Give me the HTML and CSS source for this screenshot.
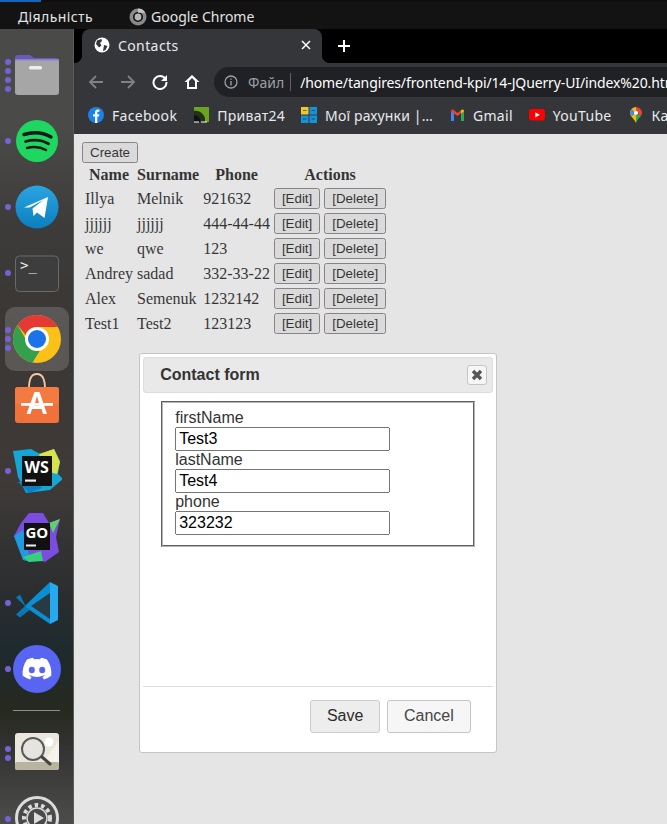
FILE: index.html
```html
<!DOCTYPE html>
<html lang="en">
<head>
  <meta charset="UTF-8">
  <title>Contacts</title>
  <link rel="stylesheet" href="styles.css">
</head>
<body>
  <header class="topbar">
    <span class="activities">Діяльність</span>
    <span class="app-name">
      <svg width="18" height="18" viewBox="0 0 18 18"><circle cx="9" cy="9" r="8.5" fill="#8a8a8a"/><circle cx="9" cy="9" r="5" fill="#111"/><circle cx="9" cy="9" r="3.4" fill="#b5b5b5"/><path d="M9 .5a8.500 8.500 0 0 1 7.400 4.300H9z" fill="#c4c4c4"/></svg>
      Google Chrome
    </span>
  </header>

  <div class="desktop">
    <nav class="dock">
      <div class="dock-item">
        <span class="dots"><i></i><i></i><i></i><i></i></span>
        <svg width="48" height="48" viewBox="0 0 48 48"><path d="M2 7a3 3 0 0 1 3-3h12l4 3h22a3 3 0 0 1 3 3v12H2z" fill="#6a58bd"/><rect x="2" y="8" width="44" height="36" rx="3" fill="#a6a6a6"/><rect x="2" y="8" width="44" height="1.500" fill="#8d7fd0"/><rect x="16" y="15" width="13" height="3.400" rx="1.500" fill="#eee"/></svg>
      </div>
      <div class="dock-item">
        <span class="dots"><i></i></span>
        <svg width="48" height="48" viewBox="0 0 48 48"><circle cx="24" cy="24" r="21" fill="#1ed760"/><g fill="none" stroke="#16191a" stroke-linecap="round"><path d="M11 17.500c9-2.700 19-2 27 2.500" stroke-width="3.400"/><path d="M12.500 24.500c8-2.200 16.500-1.500 23 2.300" stroke-width="2.800"/><path d="M14 31c6.500-1.700 13.500-1 19 2" stroke-width="2.400"/></g></svg>
      </div>
      <div class="dock-item">
        <span class="dots"><i></i></span>
        <svg width="48" height="48" viewBox="0 0 48 48"><defs><linearGradient id="tg" x1="0" y1="0" x2="0" y2="1"><stop offset="0" stop-color="#2ba5e2"/><stop offset="1" stop-color="#0a7fbd"/></linearGradient></defs><circle cx="24" cy="24" r="21.500" fill="url(#tg)"/><path d="M11 24.500 35 14l-3.500 21-7.500-5.500-3.500 3.500-1-7.500 11-8.500-14 7.500z" fill="#fff"/></svg>
      </div>
      <div class="dock-item">
        <span class="dots"><i></i></span>
        <svg width="48" height="48" viewBox="0 0 48 48"><rect x="2.500" y="7" width="43" height="35.500" rx="4" fill="#3d3d3d" stroke="#6a6a6a"/><text x="7" y="21" class="term-text">&gt;_</text></svg>
      </div>
      <div class="dock-item active">
        <span class="dots"><i></i><i></i><i></i></span>
        <svg width="48" height="48" viewBox="0 0 48 48"><circle cx="24" cy="24" r="24" fill="#fbc116"/><path d="M24 0a24 24 0 0 1 20.800 12H24a12 12 0 0 0-11.300 8L4.600 9.900A24 24 0 0 1 24 0z" fill="#e53935"/><path d="M4.600 9.900 14 26.500A11 11 0 0 0 27 35.600L19.500 47.600A24 24 0 0 1 4.600 9.900z" fill="#34a04e"/><circle cx="24" cy="24" r="12" fill="#fff"/><circle cx="24" cy="24" r="9" fill="#1a73e8"/></svg>
      </div>
      <div class="dock-item">
        <svg width="48" height="64" viewBox="0 0 48 64"><path d="M16 16c0-10 2-15 8-15s8 5 8 15" fill="none" stroke="#f6c9a0" stroke-width="1.800"/><rect x="2" y="14" width="44" height="36" rx="3" fill="#f0713a"/><rect x="2" y="14" width="44" height="17" rx="3" fill="#f37b42"/><path d="M21.500 19h5l7.500 22h-4l-1.500-5h-9.500l-1.500 5h-4zM24 23l-2.800 10h5.600z" fill="#fff"/><rect x="8" y="30" width="32" height="2.800" fill="#fff"/></svg>
      </div>
      <div class="dock-item">
        <span class="dots"><i></i></span>
        <svg width="50" height="50" viewBox="0 0 50 50"><path d="M1 5l18-2 9 5 14-5 6 12-2 13 5 5-13 11-24 3-8-16z" fill="#15a6d6"/><path d="M27 8l15-5 6 13-3 12-12-3z" fill="#d9e24a"/><path d="M6 36l14-4 10 10-13 5z" fill="#0d7fc4"/><rect x="10" y="10" width="30" height="30" fill="#111"/><text x="12.500" y="27" class="ide-text">WS</text><rect x="13" y="33.500" width="11" height="2.200" fill="#eee"/></svg>
      </div>
      <div class="dock-item">
        <svg width="48" height="52" viewBox="0 0 48 52"><path d="M16 2h14l6 10 11-4-4 18 3 15-14 10-14-5-8 2L1 25 8 12z" fill="#7a4ce0"/><path d="M1 25l9-6 8 32-8-2z" fill="#1f9be0"/><path d="M10 46l18-6 2 10-14 1z" fill="#36d07a"/><path d="M36 12l11-4-7 14z" fill="#5ed36c"/><rect x="11" y="12" width="26" height="27" fill="#111"/><text x="12.500" y="27" class="ide-text small">GO</text><rect x="13" y="33.500" width="10" height="2" fill="#eee"/></svg>
      </div>
      <div class="dock-item">
        <span class="dots"><i></i></span>
        <svg width="48" height="48" viewBox="0 0 48 48"><path d="M7 15.500 3 18.500l9 8.500-9 8.500 4 3L18 30l-5.500-3z" fill="#0a76b5"/><path d="M37 3 18 21l-6 6 6 5L37 45z" fill="#0a8fd3"/><path d="M37 3l8 4v34l-8 4z" fill="#26a9ee"/><path d="M37 14v26L18 27z" fill="#2a3a42"/></svg>
      </div>
      <div class="dock-item">
        <span class="dots"><i></i></span>
        <svg width="48" height="48" viewBox="0 0 48 48"><circle cx="24" cy="24" r="24" fill="#5865f2"/><path d="M34 14.500a24 24 0 0 0-6-1.800l-.8 1.600a22 22 0 0 0-6.400 0l-.8-1.600a24 24 0 0 0-6 1.800C10.200 20 9.200 25.400 9.700 30.700a24 24 0 0 0 7.400 3.700l1.500-2.400-2.300-1.200.6-.5a17 17 0 0 0 14.200 0l.6.500-2.300 1.200 1.500 2.400a24 24 0 0 0 7.400-3.700c.6-6.100-1-11.500-4.300-16.200z" fill="#fff"/><ellipse cx="18.800" cy="25" rx="3" ry="3.200" fill="#5865f2"/><ellipse cx="29.200" cy="25" rx="3" ry="3.200" fill="#5865f2"/></svg>
      </div>
      <div class="dock-sep"></div>
      <div class="dock-item">
        <span class="dots"><i></i><i></i></span>
        <svg width="48" height="48" viewBox="0 0 48 48"><rect x="2" y="4" width="44" height="37" rx="3" fill="#e9e6dc"/><path d="M30 33 46 12v21z" fill="#f4f2ea"/><rect x="2" y="33" width="44" height="8" rx="2" fill="#b9b4a0"/><circle cx="36" cy="13" r="4.500" fill="#fff"/><circle cx="20" cy="20" r="11" fill="#e2e2e2" fill-opacity=".6" stroke="#5a5a5a" stroke-width="2"/><path d="M29 28l8 7" stroke="#444" stroke-width="3" stroke-linecap="round"/></svg>
      </div>
      <div class="dock-item">
        <span class="dots"><i></i></span>
        <svg width="48" height="48" viewBox="0 0 48 48"><circle cx="24" cy="23" r="20.500" fill="#4a4a4a" stroke="#dcdcdc" stroke-width="3"/><circle cx="24" cy="23" r="13" fill="none" stroke="#dcdcdc" stroke-width="4" stroke-dasharray="3.500 3"/><circle cx="24" cy="23" r="10" fill="#4a4a4a" stroke="#dcdcdc" stroke-width="1.500"/><path d="M21 17v12l10-6z" fill="#dcdcdc"/></svg>
      </div>
    </nav>

    <main class="browser">
      <div class="tabstrip">
        <div class="tab">
          <svg width="16" height="16" viewBox="0 0 16 16"><circle cx="8" cy="8" r="7.500" fill="#fff"/><path d="M3 3.500 7.500 2 8 4 6 6l1.500 2.500L5 10.500 2 7zM10 8l3.500 1-2 4-2.500 1z" fill="#35363a"/></svg>
          <span class="tab-title">Contacts</span>
          <svg class="tab-close" width="10" height="10" viewBox="0 0 10 10"><path d="M1 1l8 8M9 1 1 9" stroke="#fff" stroke-width="1.500"/></svg>
        </div>
        <svg class="new-tab" width="14" height="14" viewBox="0 0 14 14"><path d="M7 1v12M1 7h12" stroke="#fff" stroke-width="2"/></svg>
      </div>

      <div class="toolbar">
        <svg class="tool" width="16" height="16" viewBox="0 0 16 16"><path d="M15 8H2M8 2 2 8l6 6" fill="none" stroke="#7e8185" stroke-width="1.800"/></svg>
        <svg class="tool" width="16" height="16" viewBox="0 0 16 16"><path d="M1 8h13M8 2l6 6-6 6" fill="none" stroke="#7e8185" stroke-width="1.800"/></svg>
        <svg class="tool" width="16" height="16" viewBox="0 0 16 16"><path d="M13.500 5A6.500 6.500 0 1 0 14.500 8" fill="none" stroke="#fff" stroke-width="2"/><path d="M15 1v6H9z" fill="#fff"/></svg>
        <svg class="tool" width="16" height="16" viewBox="0 0 16 16"><path d="M8 1 .5 8H3v7h10V8h2.500zM5 13V7l3-3 3 3v6z" fill="#fff"/></svg>
        <div class="omnibox">
          <svg width="14" height="14" viewBox="0 0 14 14"><circle cx="7" cy="7" r="6" fill="none" stroke="#9aa0a6" stroke-width="1.300"/><path d="M7 6v4.500M7 3.500v1.300" stroke="#9aa0a6" stroke-width="1.400"/></svg>
          <span class="scheme">Файл</span>
          <span class="omni-sep"></span>
          <span class="url">/home/tangires/frontend-kpi/14-JQuerry-UI/index%20.html</span>
        </div>
      </div>

      <div class="bookmarks">
        <a class="bm bm-fb"><svg width="16" height="16" viewBox="0 0 16 16"><circle cx="8" cy="8" r="8" fill="#1a82ea"/><path d="M7 16V9.500H5V7.200h2V5.500C7 3.500 8.200 2.600 10 2.600l1.400.1v2H10.400c-.9 0-1.100.5-1.100 1.100v1.400h2l-.3 2.300H9.300V16z" fill="#fff"/></svg>Facebook</a>
        <a class="bm bm-privat"><svg width="16" height="16" viewBox="0 0 16 16"><rect x="1" y="0" width="15" height="15" fill="#6aa51e"/><path d="M1 4c5-1 9 2 11 7v4H1z" fill="#24301a"/><path d="M1 8c3 0 5 2 6 4v3H1z" fill="#101410"/><path d="M1 15h5M8 15h6" stroke="#fff"/></svg>Приват24</a>
        <a class="bm bm-mono"><svg width="16" height="16" viewBox="0 0 16 16"><rect width="7.500" height="7.500" fill="#f1c827"/><rect x="8.500" width="7.500" height="7.500" fill="#1493d9"/><rect y="8.500" width="7.500" height="7.500" fill="#1493d9"/><rect x="8.500" y="8.500" width="7.500" height="7.500" fill="#1493d9"/><path d="M2 3.500h3.500M10.500 3.500H14M2 12h3.500M10.500 12H14" stroke="#222" stroke-opacity=".6"/></svg>Мої рахунки |…</a>
        <a class="bm bm-gmail"><svg width="15" height="12" viewBox="0 0 15 12"><path d="M1 12V2l3 2.200V12z" fill="#4285f4"/><path d="M11 12V4.200L14 2v10z" fill="#34a853"/><path d="M1 2.500C1 .5 2.500 0 4 1.200L7.500 4 11 1.200l0 3L7.500 7 1 2.500z" fill="#ea4335"/><path d="M11 1.200C12.500 0 14 .5 14 2.500L11 4.500z" fill="#fbbc04"/></svg>Gmail</a>
        <a class="bm bm-yt"><svg width="16" height="12" viewBox="0 0 16 12"><rect width="16" height="11.500" rx="3" fill="#f00"/><path d="M6.300 3.200v5.200l4.500-2.600z" fill="#fff"/></svg>YouTube</a>
        <a class="bm bm-maps"><svg width="12" height="16" viewBox="0 0 12 16"><path d="M6 16C4.500 12 0 9.500 0 5.800A6 6 0 0 1 6 0z" fill="#fbbc04"/><path d="M6 0a6 6 0 0 1 6 5.800C12 7 11.500 8 11 9L6 6z" fill="#ea4335"/><path d="M6 16c1-3 3-5 5-7L6 6z" fill="#34a853"/><path d="M1.500 2 6 6 2 9 0 6z" fill="#4285f4"/><circle cx="6" cy="5.800" r="2" fill="#fff"/></svg>Карти</a>
      </div>

      <div class="page">
        <button>Create</button>
        <table>
          <tr><th>Name</th><th>Surname</th><th>Phone</th><th>Actions</th></tr>
          <tr><td>Illya</td><td>Melnik</td><td>921632</td><td><button>[Edit]</button> <button>[Delete]</button></td></tr>
          <tr><td>jjjjjj</td><td>jjjjjj</td><td>444-44-44</td><td><button>[Edit]</button> <button>[Delete]</button></td></tr>
          <tr><td>we</td><td>qwe</td><td>123</td><td><button>[Edit]</button> <button>[Delete]</button></td></tr>
          <tr><td>Andrey</td><td>sadad</td><td>332-33-22</td><td><button>[Edit]</button> <button>[Delete]</button></td></tr>
          <tr><td>Alex</td><td>Semenuk</td><td>1232142</td><td><button>[Edit]</button> <button>[Delete]</button></td></tr>
          <tr><td>Test1</td><td>Test2</td><td>123123</td><td><button>[Edit]</button> <button>[Delete]</button></td></tr>
        </table>

        <div class="overlay"></div>

        <div class="dialog">
          <div class="dialog-title">
            <span class="dialog-heading">Contact form</span>
            <button class="dialog-close"><svg width="12" height="12" viewBox="0 0 12 12"><path d="M2 2l8 8M10 2l-8 8" stroke="#555" stroke-width="3.400"/></svg></button>
          </div>
          <div class="dialog-content">
            <fieldset>
              <label for="firstName">firstName</label>
              <input id="firstName" type="text" value="Test3">
              <label for="lastName">lastName</label>
              <input id="lastName" type="text" value="Test4">
              <label for="phone">phone</label>
              <input id="phone" type="text" value="323232">
            </fieldset>
          </div>
          <div class="dialog-buttons">
            <button class="dialog-btn hover">Save</button>
            <button class="dialog-btn">Cancel</button>
          </div>
        </div>
      </div>
    </main>
  </div>
</body>
</html>
```

FILE: styles.css
```css
html, body {
  height: 100%;
}

body {
  margin: 0;
  overflow: hidden;
  display: flex;
  flex-direction: column;
  background: #000;
  font-family: "Noto Sans", sans-serif;
}

.topbar {
  height: 29px;
  flex: none;
  box-sizing: border-box;
  display: flex;
  align-items: center;
  gap: 36px;
  padding: 2px 0 0 18px;
  background: #131313;
  border-top: 2px solid #0e0e0e;
  color: #e4e4e4;
  font-size: 14px;
  position: relative;
}

.topbar::before {
  content: "";
  position: absolute;
  left: 0;
  top: -2px;
  width: 41px;
  height: 2px;
  background: #1565c0;
}

.activities {
  letter-spacing: 0.4px;
}

.app-name {
  display: flex;
  align-items: center;
  gap: 4px;
}

.desktop {
  flex: 1;
  display: flex;
  min-height: 0;
}

.dock {
  width: 74px;
  flex: none;
  padding-top: 13px;
  box-sizing: border-box;
  overflow: hidden;
  border-right: 1px solid #5a5a58;
  background: linear-gradient(180deg, #4a4a49 0, #4a4a49 100px, #3d3b39 200px, #3a3735 300px, #3f3a38 450px, #2c2e30 560px, #1e2a2e 620px, #26291f 680px, #333 720px, #4b4b49 790px);
}

.dock-item {
  height: 66px;
  position: relative;
  display: flex;
  align-items: center;
  justify-content: center;
}

.dock-item.active::before {
  content: "";
  position: absolute;
  left: 5px;
  top: 1px;
  width: 64px;
  height: 64px;
  border-radius: 10px;
  background: rgba(255, 255, 255, 0.16);
}

.dock-item svg {
  position: relative;
  flex: none;
}

.dots {
  position: absolute;
  left: 5px;
  top: 0;
  bottom: 0;
  display: flex;
  flex-direction: column;
  justify-content: center;
  gap: 3px;
  z-index: 1;
}

.dots i {
  display: block;
  width: 6px;
  height: 6px;
  border-radius: 50%;
  background: #7563d6;
}

.dock-sep {
  height: 1px;
  margin: 8px 13px 9px 13px;
  background: #8d8d8d;
}

.term-text {
  font-family: "DejaVu Sans Mono", monospace;
  font-size: 14px;
  fill: #eee;
}

.ide-text {
  font-family: "Open Sans", sans-serif;
  font-weight: 700;
  font-size: 16px;
  fill: #fff;
}

.ide-text.small {
  font-size: 15px;
}

.browser {
  flex: 1;
  min-width: 0;
  display: flex;
  flex-direction: column;
}

.tabstrip {
  height: 34px;
  flex: none;
  display: flex;
  align-items: center;
  padding-left: 8px;
  background: #000;
}

.tab {
  width: 240px;
  height: 34px;
  box-sizing: border-box;
  display: flex;
  align-items: center;
  padding: 0 11px 2px 12px;
  border-radius: 8px 8px 0 0;
  background: #35363a;
  color: #e8eaed;
  font-size: 14px;
  position: relative;
}

.tab::before,
.tab::after {
  content: "";
  position: absolute;
  bottom: 0;
  width: 8px;
  height: 8px;
}

.tab::before {
  left: -8px;
  background: radial-gradient(circle at 0 0, #000 8px, #35363a 8.500px);
}

.tab::after {
  right: -8px;
  background: radial-gradient(circle at 100% 0, #000 8px, #35363a 8.500px);
}

.tab-title {
  flex: 1;
  margin-left: 8px;
  letter-spacing: 0.4px;
}

.new-tab {
  margin-left: 15px;
}

.toolbar {
  height: 38px;
  flex: none;
  box-sizing: border-box;
  display: flex;
  align-items: center;
  gap: 16px;
  padding-left: 14px;
  background: #35363a;
  overflow: hidden;
}

.tool {
  flex: none;
}

.omnibox {
  height: 30px;
  flex: none;
  width: 500px;
  margin-left: -2px;
  display: flex;
  align-items: center;
  padding-left: 10px;
  border-radius: 15px;
  background: #202124;
  font-size: 14px;
  white-space: nowrap;
}

.scheme {
  margin-left: 10px;
  color: #9aa0a6;
}

.omni-sep {
  width: 1px;
  height: 18px;
  margin: 0 9px 0 6px;
  background: #5f6368;
}

.url {
  color: #fff;
  letter-spacing: -0.12px;
}

.bookmarks {
  height: 33px;
  flex: none;
  box-sizing: border-box;
  display: flex;
  align-items: center;
  padding: 0 0 5px 14px;
  background: #35363a;
  color: #e8eaed;
  font-size: 14px;
  letter-spacing: 0.3px;
  white-space: nowrap;
  overflow: hidden;
}

.bm {
  display: flex;
  align-items: center;
  gap: 8px;
  margin-right: 16px;
}

.bm-mono {
  letter-spacing: 0.15px;
  margin-right: 17px;
}

.bm-yt {
  margin-right: 18px;
}

.bm-maps {
  gap: 10px;
}

.page {
  flex: 1;
  padding: 8px;
  background: #fff;
  position: relative;
  font-family: "Liberation Serif", serif;
  font-size: 16px;
  color: #000;
}

.page > button {
  display: block;
}

button {
  font-family: "Liberation Sans", sans-serif;
  font-size: 13.333px;
}

.overlay {
  position: absolute;
  inset: 0;
  background: rgba(170, 170, 170, 0.3);
}

.dialog {
  position: absolute;
  left: 65px;
  top: 219px;
  width: 358px;
  height: 400px;
  box-sizing: border-box;
  display: flex;
  flex-direction: column;
  padding: 3.200px;
  border: 1px solid #c5c5c5;
  border-radius: 3px;
  background: #fff;
  color: #333;
  font-family: "Liberation Sans", sans-serif;
}

.dialog-title {
  flex: none;
  display: flex;
  align-items: center;
  justify-content: space-between;
  padding: 6.400px 5px 6.400px 16px;
  border: 1px solid #ddd;
  border-radius: 3px;
  background: #e9e9e9;
  font-weight: 700;
  line-height: 21px;
}

.dialog-heading {
  margin: -1px 0 1px;
}

.dialog-close {
  width: 20px;
  height: 20px;
  padding: 0;
  display: flex;
  align-items: center;
  justify-content: center;
  border: 1px solid #c5c5c5;
  border-radius: 3px;
  background: #f6f6f6;
}

.dialog-content {
  flex: 1;
  padding: 8px 16px;
}

fieldset {
  margin: 0 2px;
  border: 2px groove #b4b4b4;
}

label {
  display: block;
}

input {
  display: block;
  width: 215px;
  height: 24px;
  box-sizing: border-box;
  font-family: "Liberation Sans", sans-serif;
  font-size: 16px;
  color: #000;
}

.dialog-buttons {
  flex: none;
  display: flex;
  justify-content: flex-end;
  margin-top: 8px;
  padding: 4.800px 16px 8px 6.400px;
  border-top: 1px solid #ddd;
}

.dialog-btn {
  margin: 8px 6.600px 8px 0;
  padding: 6.400px 16px;
  border: 1px solid #c5c5c5;
  border-radius: 3px;
  background: #f6f6f6;
  color: #454545;
  font-size: 16px;
}

.dialog-btn.hover {
  border-color: #ccc;
  background: #ededed;
  color: #2b2b2b;
}

.dialog-buttons .dialog-btn:last-child {
  margin-right: 6px;
}
```
